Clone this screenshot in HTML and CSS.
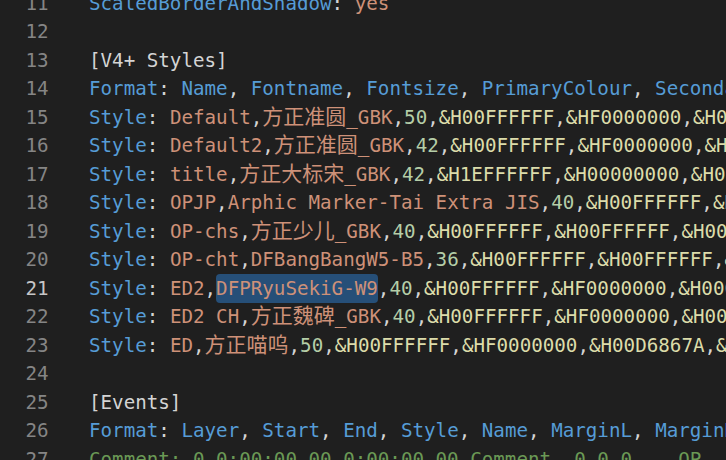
FILE: index.html
```html
<!DOCTYPE html>
<html lang="zh">
<head>
  <meta charset="UTF-8" />
  <title>subtitle.ass</title>
  <link rel="stylesheet" href="styles.css">
</head>
<body>
  <div class="editor">
    <div class="row"><span class="ln">11</span><span class="code"><span class="k">ScaledBorderAndShadow</span><span class="p">: </span><span class="s">yes</span></span></div>
    <div class="row"><span class="ln">12</span><span class="code"></span></div>
    <div class="row"><span class="ln">13</span><span class="code"><span class="p">[V4+ Styles]</span></span></div>
    <div class="row"><span class="ln">14</span><span class="code"><span class="k">Format</span><span class="p">: </span><span class="k">Name</span><span class="p">, </span><span class="k">Fontname</span><span class="p">, </span><span class="k">Fontsize</span><span class="p">, </span><span class="k">PrimaryColour</span><span class="p">, </span><span class="k">SecondaryColour</span><span class="p">, </span><span class="k">OutlineColour</span></span></div>
    <div class="row"><span class="ln">15</span><span class="code"><span class="k">Style</span><span class="p">: </span><span class="s">Default</span><span class="p">,</span><span class="s"><span class="cjk">方正准圆</span>_GBK</span><span class="p">,</span><span class="n">50</span><span class="p">,</span><span class="h">&amp;H00FFFFFF</span><span class="p">,</span><span class="h">&amp;HF0000000</span><span class="p">,</span><span class="h">&amp;H00000000</span><span class="p">,</span></span></div>
    <div class="row"><span class="ln">16</span><span class="code"><span class="k">Style</span><span class="p">: </span><span class="s">Default2</span><span class="p">,</span><span class="s"><span class="cjk">方正准圆</span>_GBK</span><span class="p">,</span><span class="n">42</span><span class="p">,</span><span class="h">&amp;H00FFFFFF</span><span class="p">,</span><span class="h">&amp;HF0000000</span><span class="p">,</span><span class="h">&amp;H00000000</span><span class="p">,</span></span></div>
    <div class="row"><span class="ln">17</span><span class="code"><span class="k">Style</span><span class="p">: </span><span class="s">title</span><span class="p">,</span><span class="s"><span class="cjk">方正大标宋</span>_GBK</span><span class="p">,</span><span class="n">42</span><span class="p">,</span><span class="h">&amp;H1EFFFFFF</span><span class="p">,</span><span class="h">&amp;H00000000</span><span class="p">,</span><span class="h">&amp;H00000000</span><span class="p">,</span></span></div>
    <div class="row"><span class="ln">18</span><span class="code"><span class="k">Style</span><span class="p">: </span><span class="s">OPJP</span><span class="p">,</span><span class="s">Arphic Marker-Tai Extra JIS</span><span class="p">,</span><span class="n">40</span><span class="p">,</span><span class="h">&amp;H00FFFFFF</span><span class="p">,</span><span class="h">&amp;H00FFFFFF</span><span class="p">,</span></span></div>
    <div class="row"><span class="ln">19</span><span class="code"><span class="k">Style</span><span class="p">: </span><span class="s">OP-chs</span><span class="p">,</span><span class="s"><span class="cjk">方正少儿</span>_GBK</span><span class="p">,</span><span class="n">40</span><span class="p">,</span><span class="h">&amp;H00FFFFFF</span><span class="p">,</span><span class="h">&amp;H00FFFFFF</span><span class="p">,</span><span class="h">&amp;H00000000</span><span class="p">,</span></span></div>
    <div class="row"><span class="ln">20</span><span class="code"><span class="k">Style</span><span class="p">: </span><span class="s">OP-cht</span><span class="p">,</span><span class="s">DFBangBangW5-B5</span><span class="p">,</span><span class="n">36</span><span class="p">,</span><span class="h">&amp;H00FFFFFF</span><span class="p">,</span><span class="h">&amp;H00FFFFFF</span><span class="p">,</span><span class="h">&amp;H00000000</span><span class="p">,</span></span></div>
    <div class="row active"><span class="ln">21</span><span class="code"><span class="k">Style</span><span class="p">: </span><span class="s">ED2</span><span class="p">,</span><span class="s sel">DFPRyuSekiG-W9</span><span class="p">,</span><span class="n">40</span><span class="p">,</span><span class="h">&amp;H00FFFFFF</span><span class="p">,</span><span class="h">&amp;HF0000000</span><span class="p">,</span><span class="h">&amp;H00000000</span><span class="p">,</span></span></div>
    <div class="row"><span class="ln">22</span><span class="code"><span class="k">Style</span><span class="p">: </span><span class="s">ED2 CH</span><span class="p">,</span><span class="s"><span class="cjk">方正魏碑</span>_GBK</span><span class="p">,</span><span class="n">40</span><span class="p">,</span><span class="h">&amp;H00FFFFFF</span><span class="p">,</span><span class="h">&amp;HF0000000</span><span class="p">,</span><span class="h">&amp;H00000000</span><span class="p">,</span></span></div>
    <div class="row"><span class="ln">23</span><span class="code"><span class="k">Style</span><span class="p">: </span><span class="s">ED</span><span class="p">,</span><span class="s"><span class="cjk">方正喵呜</span></span><span class="p">,</span><span class="n">50</span><span class="p">,</span><span class="h">&amp;H00FFFFFF</span><span class="p">,</span><span class="h">&amp;HF0000000</span><span class="p">,</span><span class="h">&amp;H00D6867A</span><span class="p">,</span><span class="h">&amp;H00000000</span></span></div>
    <div class="row"><span class="ln">24</span><span class="code"></span></div>
    <div class="row"><span class="ln">25</span><span class="code"><span class="p">[Events]</span></span></div>
    <div class="row"><span class="ln">26</span><span class="code"><span class="k">Format</span><span class="p">: </span><span class="k">Layer</span><span class="p">, </span><span class="k">Start</span><span class="p">, </span><span class="k">End</span><span class="p">, </span><span class="k">Style</span><span class="p">, </span><span class="k">Name</span><span class="p">, </span><span class="k">MarginL</span><span class="p">, </span><span class="k">MarginR</span><span class="p">, </span><span class="k">MarginV</span></span></div>
    <div class="row"><span class="ln">27</span><span class="code"><span class="c">Comment: 0,0:00:00.00,0:00:00.00,Comment,,0,0,0,,——OP——</span></span></div>
  </div>
</body>
</html>
```

FILE: styles.css
```css
html, body {
  margin: 0;
  height: 100%;
  background-color: #1f1f1f;
  overflow: hidden;
}

.editor {
  margin-top: -10.5px;
  font-family: "DejaVu Sans Mono", "Noto Sans CJK SC", monospace;
  font-size: 19.2px;
  line-height: 28.5px;
  color: #d4d4d4;
}

.row {
  display: flex;
  height: 28.5px;
  white-space: pre;
}

.ln {
  flex: 0 0 48.5px;
  text-align: right;
  color: #858585;
}

.row.active .ln {
  color: #c6c6c6;
}

.code {
  margin-left: 40.5px;
}

.k { color: #569cd6; }
.p { color: #d4d4d4; }
.s { color: #ce9178; }
.n { color: #b5cea8; }
.h { color: #dcdcaa; }
.c { color: #6a9955; }

.cjk {
  font-family: "Noto Sans CJK SC", sans-serif;
  font-size: 21px;
  line-height: 1;
}

.sel {
  background-color: #264f78;
  border-radius: 4px;
  padding: 3px 0;
}
```
